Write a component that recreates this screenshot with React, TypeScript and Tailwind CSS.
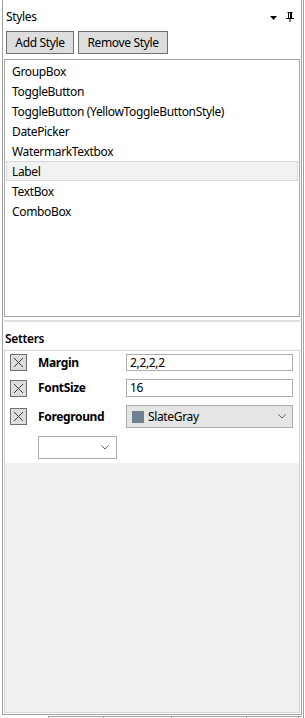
import React from 'react';

const font = { fontFamily: '"Noto Sans", "Open Sans", Arial, sans-serif' };

const styleItems = [
  'GroupBox',
  'ToggleButton',
  'ToggleButton (YellowToggleButtonStyle)',
  'DatePicker',
  'WatermarkTextbox',
  'Label',
  'TextBox',
  'ComboBox',
];

function Chevron() {
  return (
    <svg width="8" height="5" viewBox="0 0 8 5" className="shrink-0">
      <path d="M0.5 0.5 L4 4 L7.5 0.5" fill="none" stroke="#606060" strokeWidth="1" />
    </svg>
  );
}

function RemoveBox() {
  return (
    <div className="w-[17px] h-[17px] shrink-0 ml-[5px] bg-[#dddddd] border border-[#707070] flex items-center justify-center">
      <svg width="11" height="11" viewBox="0 0 11 11">
        <path d="M1 1 L10 10 M10 1 L1 10" stroke="#3c3c3c" strokeWidth="1" />
      </svg>
    </div>
  );
}

function SetterRow({ name, children, className }: { name: string; children: React.ReactNode; className: string }) {
  return (
    <div className={`flex items-center ${className}`}>
      <RemoveBox />
      <span className="ml-[11px] w-[88px] font-bold text-[12px] leading-[16px] text-black">{name}</span>
      {children}
    </div>
  );
}

export default function App() {
  return (
    <div className="w-[305px] h-[718px] bg-white flex overflow-hidden text-black tracking-[-0.35px]" style={font}>
      <div className="w-[302px] shrink-0 flex flex-col">
        {/* Panel frame */}
        <div className="ml-[2px] w-[300px] h-[715px] border-l border-r border-b border-[#a0a0a0] flex flex-col">
          {/* Title bar */}
          <div className="h-[29px] shrink-0 flex items-start pt-[9px] pl-[3px] pr-[7px]">
            <span className="text-[12px] leading-[16px] flex-1">Styles</span>
            <svg width="7" height="4" viewBox="0 0 7 4" className="mt-[7px] mr-[9px]">
              <path d="M0 0 H7 L3.5 4 Z" fill="#000" />
            </svg>
            <svg width="8" height="10" viewBox="0 0 8 10" className="mt-[3px]">
              <path d="M1.5 0.5 H6.5 M2.5 0.5 V6 M5.5 0.5 V6 M4.5 0.5 V6 M0 6.5 H8 M4 6.5 V10" stroke="#000" strokeWidth="1" fill="none" />
            </svg>
          </div>

          {/* Buttons */}
          <div className="flex gap-[4px] ml-[3px] mt-[2px] shrink-0">
            <button className="w-[68px] h-[23px] bg-[#dddddd] border border-[#707070] text-[12px] leading-[16px]">
              Add Style
            </button>
            <button className="w-[90px] h-[23px] bg-[#dddddd] border border-[#707070] text-[12px] leading-[16px]">
              Remove Style
            </button>
          </div>

          {/* Style list */}
          <div className="mx-[1px] mt-[5px] h-[258px] shrink-0 border border-[#a8a8a8] p-[1px]">
            {styleItems.map(item => (
              <div
                key={item}
                className={`h-[20px] pl-[5px] text-[12px] leading-[20px] border ${
                  item === 'Label' ? 'bg-[#f2f2f2] border-[#dadada]' : 'border-transparent'
                }`}
              >
                {item}
              </div>
            ))}
          </div>

          {/* Splitter */}
          <div className="mx-[1px] mt-[3px] h-[2px] shrink-0 bg-[#dedede]" />

          <div className="mt-[9px] ml-[2px] text-[12px] leading-[16px] font-semibold shrink-0">Setters</div>

          {/* Setters panel */}
          <div className="mx-[1px] mt-[3px] flex-1 border border-[#d6d6d6] bg-[#f0f0f0] flex flex-col mb-[1px]">
            <div className="bg-white pb-[4px]">
              <SetterRow name="Margin" className="mt-[3px] h-[17px]">
                <div className="w-[167px] h-[17px] border border-[#abadb3] text-[12px] leading-[15px] pl-[3px]">2,2,2,2</div>
              </SetterRow>
              <SetterRow name="FontSize" className="mt-[8px] h-[18px]">
                <div className="w-[167px] h-[18px] border border-[#abadb3] text-[12px] leading-[16px] pl-[3px]">16</div>
              </SetterRow>
              <SetterRow name="Foreground" className="mt-[8px] h-[23px]">
                <div className="w-[167px] h-[23px] border border-[#acacac] bg-[#e5e5e5] flex items-center pl-[5px] pr-[6px]">
                  <span className="w-[12px] h-[12px] bg-[#708090] shrink-0" />
                  <span className="ml-[4px] text-[12px] leading-[16px] flex-1">SlateGray</span>
                  <Chevron />
                </div>
              </SetterRow>
              <div className="mt-[8px] ml-[33px] w-[79px] h-[23px] border border-[#acacac] bg-white flex items-center justify-end pr-[7px]">
                <Chevron />
              </div>
            </div>
          </div>
        </div>

        {/* Bottom tab strip */}
        <div className="mt-[1px] h-[2px] flex ml-[48px]">
          <div className="w-[55px] border-t border-l border-[#a0a0a0]" />
          <div className="w-[68px] border-t border-l border-[#a0a0a0]" />
          <div className="w-[75px] border-t border-l border-[#a0a0a0]" />
          <div className="w-[52px] border-t border-l border-[#a0a0a0]" />
          <div className="flex-1 border-t border-l border-[#a0a0a0]" />
        </div>
      </div>
      <div className="w-[1px] h-full bg-[#a0a0a0] shrink-0 ml-[1px]" />
    </div>
  );
}
